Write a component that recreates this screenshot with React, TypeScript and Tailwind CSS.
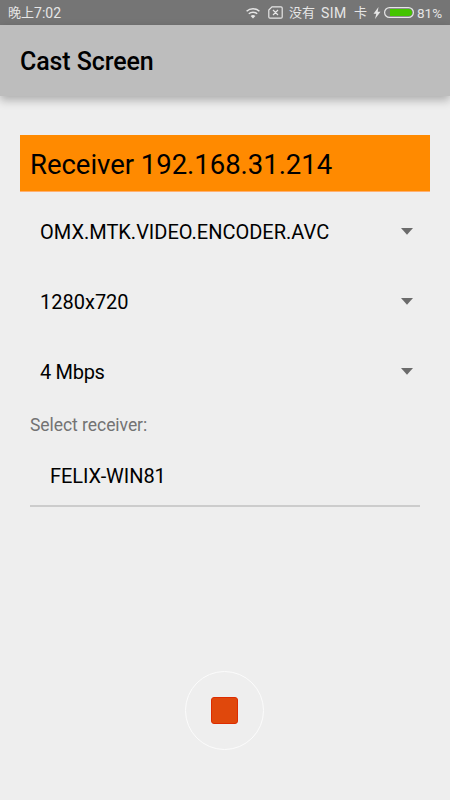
import { useState } from "react"

const options = ["OMX.MTK.VIDEO.ENCODER.AVC", "1280x720", "4 Mbps"]

export default function App() {
  const [receiver] = useState("192.168.31.214")
  return (
    <div className="flex h-[800px] w-[450px] flex-col overflow-hidden bg-[#eeeeee] font-['Roboto','Noto_Sans_CJK_SC',sans-serif] text-black">
      <StatusBar />
      <header className="z-10 flex h-[71px] shrink-0 items-center bg-[#bdbdbd] pl-5 shadow-[0_4px_9px_rgba(0,0,0,0.28)]">
        <h1 className="pt-[2px] text-[25px] leading-[30px] font-medium tracking-[-0.1px]">Cast Screen</h1>
      </header>
      <main className="flex grow flex-col px-5 pt-[39px]">
        <div className="h-[57px] border-b border-[#ffb070] bg-[#ff8a00] pl-[10px] text-[27.5px] leading-[60px] tracking-[-0.03px]">
          Receiver {receiver}
        </div>
        <div className="pt-[10px]">
          {options.map((o) => (
            <Spinner key={o} label={o} />
          ))}
        </div>
        <div className="px-[10px]">
          <div className="h-[24px] text-[17.5px] leading-[26px] tracking-[-0.05px] text-[#737373]">Select receiver:</div>
          <div className="h-[71px] border-b-2 border-[#cccccc] pl-5 text-[20px] leading-[81px] tracking-[-0.05px]">FELIX-WIN81</div>
        </div>
      </main>
      <footer className="flex h-[129px] shrink-0 justify-center pr-px">
        <button className="flex size-[79px] items-center justify-center rounded-full border-[1.5px] border-[#fcfcfc]">
          <span className="size-[27px] rounded-[3px] border border-[#dd2c00] bg-[#e0480c]" />
        </button>
      </footer>
    </div>
  )
}

function Spinner({ label }: { label: string }) {
  return (
    <div className="flex h-[70px] items-start justify-between pr-[17px] pl-5 text-[20px] leading-[61px]">
      <span className={label === "4 Mbps" ? "tracking-[-0.3px]" : ""}>{label}</span>
      <svg width="12" height="7" viewBox="0 0 12 7" className="mt-[26px]">
        <path d="M0 0h12L6 6.7z" fill="#6b6b6b" />
      </svg>
    </div>
  )
}

function StatusBar() {
  return (
    <div className="flex h-[25px] shrink-0 items-center bg-[#757575] pl-2 text-[13px] leading-[25px] text-[#e6e6e6]">
      <span className="flex grow items-center">
        晚上<span className="pt-px text-[14px]">7:02</span>
      </span>
      <svg width="14" height="12" viewBox="0 0 14 12" fill="none" stroke="#e6e6e6" strokeWidth="1.5">
        <path d="M0.6 4.3a9.2 9.2 0 0 1 12.8 0M2.8 6.8a6.2 6.2 0 0 1 8.4 0" />
        <path d="M4.6 9a3.6 3.6 0 0 1 4.8 0L7 11.5z" fill="#e6e6e6" stroke="none" />
      </svg>
      <svg width="15" height="13" viewBox="0 0 15 13" fill="none" stroke="#e6e6e6" strokeWidth="1.2" className="ml-[8px]">
        <path d="M4 0.8h9q1.2 0 1.2 1.2v9q0 1.2-1.2 1.2H2Q0.8 12.2 0.8 11V4zM5 4l5 5M10 4L5 9" />
      </svg>
      <span className="ml-[6px] w-[26px] whitespace-nowrap">没有</span>
      <span className="ml-[6px] w-[27px] pt-px text-[14px] tracking-[0.5px]">SIM</span>
      <span className="ml-[6px] w-[13px]">卡</span>
      <svg width="8" height="12" viewBox="0 0 8 12" className="ml-[6px]">
        <path d="M5.5 0L0.5 6.8h2.8L2 12l5.5-7.3H4.7z" fill="#e6e6e6" />
      </svg>
      <svg width="30" height="11" viewBox="0 0 30 11" className="ml-[3px]">
        <rect x="0.6" y="0.6" width="28.8" height="9.8" rx="4.9" fill="none" stroke="#e6e6e6" strokeWidth="1.2" />
        <path d="M6 2h18.5a3.5 3.5 0 0 1 0 7H6z" fill="#44c400" />
      </svg>
      <span className="ml-[3px] w-[33px] pt-px text-[13.5px]">81%</span>
    </div>
  )
}
